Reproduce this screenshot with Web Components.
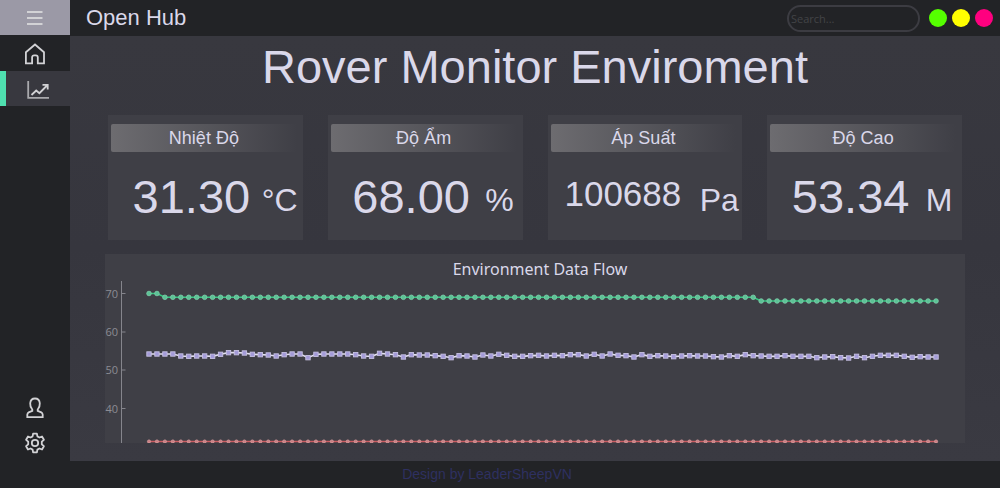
<!DOCTYPE html>
<html lang="vi">
<head>
<meta charset="utf-8">
<meta name="viewport" content="width=device-width, initial-scale=1">
<title>Open Hub</title>
<style>
body { margin: 0; background: #222326; color: #dad8ea; font-family: "Liberation Sans", Arial, sans-serif; }
</style>
</head>
<body>
<hub-app>
  <hub-header slot="header" heading="Open Hub"></hub-header>
  <hub-nav slot="nav"></hub-nav>
  <hub-panel heading="Rover Monitor Enviroment">
    <metric-card label="Nhiệt Độ" unit="°C">31.30</metric-card>
    <metric-card label="Độ Ẩm" unit="%">68.00</metric-card>
    <metric-card label="Áp Suất" unit="Pa" compact>100688</metric-card>
    <metric-card label="Độ Cao" unit="M">53.34</metric-card>
    <data-chart slot="chart" heading="Environment Data Flow"></data-chart>
  </hub-panel>
  <hub-footer slot="footer">Design by LeaderSheepVN</hub-footer>
</hub-app>
<script>
class Base extends HTMLElement {
  connectedCallback() {
    if (this.shadowRoot) return;
    this.attachShadow({ mode: 'open' }).innerHTML = this.render();
  }
  attr(name) { return this.getAttribute(name) || ''; }
}

customElements.define('hub-app', class extends Base {
  render() {
    return `<style>
      :host { display: grid; min-height: 100vh; grid-template: auto 1fr auto / 70px 1fr; }
      .top { grid-column: 2; grid-row: 1; }
      .side { grid-column: 1; grid-row: 1 / 3; display: flex; }
      main { grid-column: 2; grid-row: 2; background: linear-gradient(#38383f, #36363e 50%, #3a3a42); }
      .foot { grid-column: 1 / 3; grid-row: 3; }
    </style>
    <div class="side"><slot name="nav"></slot></div>
    <div class="top"><slot name="header"></slot></div>
    <main><slot></slot></main>
    <div class="foot"><slot name="footer"></slot></div>`;
  }
});

customElements.define('hub-header', class extends Base {
  render() {
    return `<style>
      :host { display: flex; align-items: center; height: 36px; padding: 0 7px 0 16px; background: #222326; }
      .name { flex: 1; font-size: 22px; line-height: 36px; }
      input { box-sizing: border-box; width: 133px; height: 27px; margin-right: 9px; padding: 0 2px; border: 2px solid #3c3c42;
        border-radius: 14px; background: transparent; color: #dad8ea; font: 11px "Open Sans", sans-serif; outline: none; }
      input::placeholder { color: #434347; opacity: 1; }
      .dots { display: flex; gap: 5px; }
      button { width: 18px; height: 18px; padding: 0; border: 0; border-radius: 50%; }
      .green { background: #55ff00; } .yellow { background: #ffff00; } .pink { background: #ff007f; }
    </style>
    <span class="name">${this.attr('heading')}</span>
    <input type="text" placeholder="Search..." aria-label="Search">
    <div class="dots">
      <button class="green" aria-label="Minimize"></button>
      <button class="yellow" aria-label="Maximize"></button>
      <button class="pink" aria-label="Close"></button>
    </div>`;
  }
});

customElements.define('hub-nav', class extends Base {
  render() {
    return `<style>
      :host { display: flex; flex-direction: column; box-sizing: border-box; width: 70px; padding-bottom: 1px; background: #222326; }
      button { box-sizing: border-box; display: flex; align-items: center; justify-content: center; width: 70px; height: 35px;
        padding: 0; border: 0; background: transparent; color: #d2d2d5; }
      .menu { background: #9b99a6; margin-bottom: 1px; }
      .active { background: #38383f; border-left: 6px solid #4fe0b0; }
      .gap { flex: 1; }
      svg { fill: none; stroke: currentColor; stroke-width: 1.8; }
    </style>
    <button class="menu" aria-label="Menu"><svg width="16" height="16" viewBox="0 0 16 16"><path d="M0 2H15.500M0 8H15.500M0 14H15.500"/></svg></button>
    <button aria-label="Home"><svg width="22" height="22" viewBox="0 0 22 22"><path d="M1.900 9.200 11 1.500l9 7.700V20.300h-6.200v-6a2 2 0 0 0-2-2h-1.700a2 2 0 0 0-2 2v6H1.900z"/></svg></button>
    <button class="active" aria-label="Charts"><svg width="22" height="20" viewBox="0 0 22 20"><path d="M1.200 2v16.800H22" stroke="#a9a9ad"/><path d="M4.500 16l4.700-4.500 3.200 2.700L20 6.500M15.500 5.800h5.200v4.700"/></svg></button>
    <div class="gap"></div>
    <button aria-label="Account"><svg width="18" height="22" viewBox="0 0 18 22"><path d="M6.300 12.500C4.700 10.700 4 8.700 4.200 6.300 4.400 3.300 6.200 1.500 9 1.500s4.600 1.800 4.800 4.800c.2 2.400-.5 4.400-2.100 6.200v1.300l3.600 1.600c1 .5 1.300 1.300 1.400 2.300v2.400H1.300v-2.400c.1-1 .4-1.800 1.400-2.300l3.600-1.600z"/></svg></button>
    <button aria-label="Settings"><svg width="22" height="22" viewBox="0 0 22 22"><circle cx="11" cy="11" r="3.200"/><path d="M9.100 1.700h3.800l.5 2.700 2 1.100 2.600-1 1.900 3.300-2.100 1.900v2.600l2.100 1.900-1.900 3.300-2.600-1-2 1.100-.5 2.700H9.100l-.5-2.700-2-1.100-2.600 1-1.900-3.300 2.100-1.900V9.700L2.100 7.800 4 4.500l2.600 1 2-1.100z" stroke-linejoin="round"/></svg></button>`;
  }
});

customElements.define('hub-panel', class extends Base {
  render() {
    return `<style>
      :host { display: block; padding: 4px 35px 18px; }
      h1 { margin: 0; text-align: center; font-size: 47px; font-weight: 400; line-height: 54px; }
      .cards { display: grid; grid-template-columns: repeat(4, 1fr); gap: 25px; margin: 21px 3px 14px; }
    </style>
    <h1>${this.attr('heading')}</h1>
    <div class="cards"><slot></slot></div>
    <slot name="chart"></slot>`;
  }
});

customElements.define('metric-card', class extends Base {
  render() {
    return `<style>
      :host { display: block; box-sizing: border-box; height: 125px; padding: 9px 3px 0; background: #3f3f46; }
      h2 { margin: 0 3px 0 0; border-radius: 2px; background: linear-gradient(90deg, #6d6c70, #3f3f46); text-align: center;
        font-size: 18px; font-weight: 400; line-height: 28px; }
      .row { display: grid; grid-template-columns: 1fr 40px; padding-left: 12px; margin-top: 17px; text-align: center; }
      .value { font-size: 47px; line-height: 56px; }
      :host([compact]) .value { font-size: 35px; line-height: 50px; padding-right: 16px; }
      .unit { font-size: 32px; line-height: 62px; }
    </style>
    <h2>${this.attr('label')}</h2>
    <div class="row"><span class="value"><slot></slot></span><span class="unit">${this.attr('unit')}</span></div>`;
  }
});

/* Samples are stored as vertical plot positions; altitude is in thirds of a unit. */
const ALTITUDE = [42,42,42,42,48,49,48,48,49,43,38,38,39,43,44,45,48,44,42,42,53,43,42,42,42,42,44,48,49,40,
  42,44,51,44,45,45,47,49,53,47,48,51,45,48,43,46,49,49,47,46,48,46,47,44,44,48,43,48,42,46,
  47,51,44,49,47,48,50,48,47,48,48,50,51,47,49,44,47,48,49,49,47,49,49,49,53,51,50,53,54,49,
  53,49,46,46,46,49,52,50,51,51].map(v => 86 + v / 3);
const HUMIDITY = ALTITUDE.map((_, i) => i < 2 ? 39.5 : i < 77 ? 43.3 : 47);
const TEMPERATURE = ALTITUDE.map(() => 187.5);

customElements.define('data-chart', class extends Base {
  series(data, line, mark) {
    const pts = data.map((y, i) => [(44 + i * 7.95).toFixed(2), y.toFixed(2)]);
    return `<polyline points="${pts.join(' ')}" fill="none" stroke="${line}" stroke-width="1.6"/>` + pts.map(mark).join('');
  }
  render() {
    const ticks = [[70, 39.5], [60, 78], [50, 116], [40, 154.500]];
    return `<style>
      :host { display: grid; background: #3f3f46; }
      h2, svg { grid-area: 1 / 1; }
      h2 { margin: 4px 0 0 10px; text-align: center; font: 400 16px/22px "Noto Sans", sans-serif; }
      svg { display: block; width: 100%; height: auto; }
      text { font: 11px "Open Sans", sans-serif; fill: #8c8c93; }
    </style>
    <h2>${this.attr('heading')}</h2>
    <svg viewBox="0 0 860 189" role="img" aria-label="${this.attr('heading')}">
      <path d="M16.500 27V189" stroke="#85858c"/>
      ${ticks.map(([n, y]) => `<path d="M16.500 ${y}h4" stroke="#85858c"/><text x="13" y="${y + 4}" text-anchor="end">${n}</text>`).join('')}
      ${this.series(HUMIDITY, '#35c881', ([x, y]) => `<circle cx="${x}" cy="${y}" r="2.300" fill="#5cc296" stroke="#7fd0ac" stroke-width=".8"/>`)}
      ${this.series(ALTITUDE, '#e2e0f0', ([x, y]) => `<rect x="${x - 2.2}" y="${y - 2.2}" width="4.400" height="4.400" fill="#a39ad8" stroke="#c6c0e2" stroke-width=".9"/>`)}
      ${this.series(TEMPERATURE, '#cb5c62', ([x, y]) => `<circle cx="${x}" cy="${y}" r="1.600" fill="#cb8084" stroke="#e0a2a5" stroke-width=".7"/>`)}
    </svg>`;
  }
});

customElements.define('hub-footer', class extends Base {
  render() {
    return `<style>
      :host { display: block; padding-right: 26px; background: #222326; color: #2e3060; text-align: center; font-size: 14px; line-height: 27px; }
    </style><slot></slot>`;
  }
});
</script>
</body>
</html>
